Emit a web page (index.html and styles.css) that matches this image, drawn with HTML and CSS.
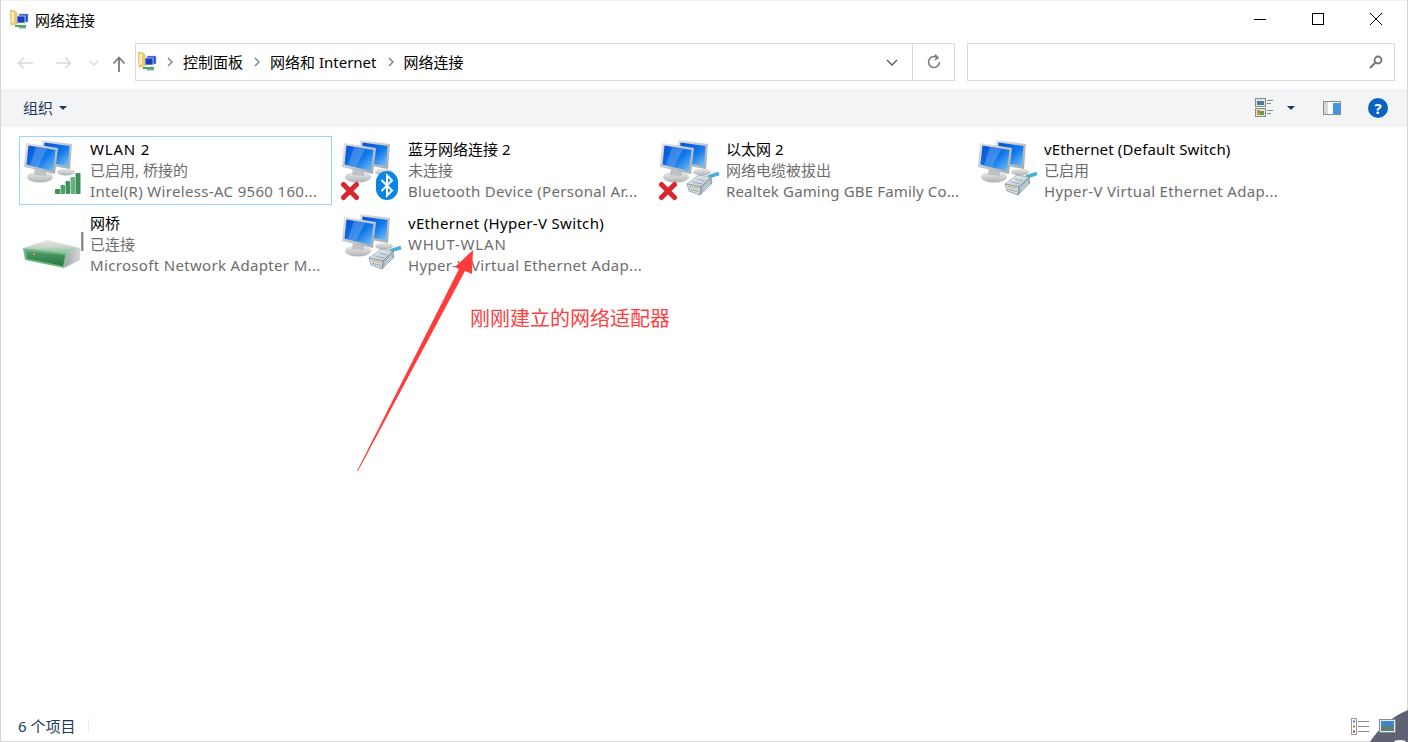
FILE: index.html
```html
<!DOCTYPE html>
<html lang="zh-CN">
<head>
  <meta charset="UTF-8">
  <meta name="viewport" content="width=device-width, initial-scale=1.0">
  <title>网络连接</title>
  <link rel="stylesheet" href="styles.css">
</head>
<body>

<svg class="defs" aria-hidden="true">
  <defs>
    <linearGradient id="screen" x1="0" y1="0" x2="1" y2="1">
      <stop offset="0" stop-color="#0550d6"/>
      <stop offset="0.55" stop-color="#0f78ea"/>
      <stop offset="1" stop-color="#7cc4f6"/>
    </linearGradient>
    <linearGradient id="frame" x1="0" y1="0" x2="1" y2="1">
      <stop offset="0" stop-color="#e2e5e8"/>
      <stop offset="1" stop-color="#a3a9af"/>
    </linearGradient>
    <linearGradient id="stand" x1="0" y1="0" x2="0" y2="1">
      <stop offset="0" stop-color="#eceded"/>
      <stop offset="1" stop-color="#b0b3b5"/>
    </linearGradient>
    <linearGradient id="routerTop" x1="0" y1="0" x2="0" y2="1">
      <stop offset="0" stop-color="#e4e6e5"/>
      <stop offset="0.55" stop-color="#c9d4cc"/>
      <stop offset="1" stop-color="#7cc08f"/>
    </linearGradient>
    <linearGradient id="routerFront" x1="0" y1="0" x2="0" y2="1">
      <stop offset="0" stop-color="#4f9e68"/>
      <stop offset="1" stop-color="#2a7342"/>
    </linearGradient>
    <linearGradient id="routerSide" x1="0" y1="0" x2="1" y2="0">
      <stop offset="0" stop-color="#9ea3a5"/>
      <stop offset="1" stop-color="#d6d9da"/>
    </linearGradient>
    <linearGradient id="plug" x1="0" y1="0" x2="1" y2="1">
      <stop offset="0" stop-color="#eef3f6"/>
      <stop offset="1" stop-color="#b4c2cc"/>
    </linearGradient>

    <symbol id="monitors" viewBox="0 0 64 64">
      <ellipse cx="44" cy="33" rx="9" ry="3.500" fill="url(#stand)"/>
      <polygon points="20,1 50,5 48,30 19,25" fill="url(#frame)"/>
      <polygon points="22.500,3.500 47.500,7 46,27 21,23" fill="url(#screen)"/>
      <ellipse cx="18" cy="38" rx="13" ry="5.500" fill="url(#stand)"/>
      <polygon points="13,29 24,31 24,37 12,36" fill="#bfc2c4"/>
      <polygon points="4,4 36,9 33,35 2,28" fill="url(#frame)"/>
      <polygon points="6.500,6.500 33.500,11 31,32 4.500,25.500" fill="url(#screen)"/>
      <polygon points="14,8 25,10 16,28 8,26" fill="#ffffff" opacity="0.2"/>
    </symbol>

    <symbol id="signal" viewBox="0 0 64 64">
      <rect x="33" y="50" width="5" height="5" rx="1" fill="#3f8f59"/>
      <rect x="38.500" y="46" width="4.500" height="9" rx="1" fill="#4aa566"/>
      <rect x="43.500" y="42" width="4.500" height="13" rx="1" fill="#3f8f59"/>
      <rect x="48.500" y="38" width="4.500" height="17" rx="1" fill="#62b27c"/>
      <rect x="53.500" y="34" width="5" height="21" rx="1" fill="#3f8f59"/>
    </symbol>

    <symbol id="cross" viewBox="0 0 64 64">
      <path d="M3.500 45.500 L16.500 58.500 M16.500 45.500 L3.500 58.500" stroke="#d6282e" stroke-width="5" stroke-linecap="round"/>
    </symbol>

    <symbol id="bluetooth" viewBox="0 0 64 64">
      <rect x="36" y="32" width="22" height="29" rx="11" fill="#0a84e6"/>
      <path d="M41.500 41 L52 51.500 L47 56.500 L47 36.500 L52 41.500 L41.500 52" fill="none" stroke="#ffffff" stroke-width="2"/>
    </symbol>

    <symbol id="ethernet" viewBox="0 0 64 64">
      <path d="M50 38 L61 34.500" stroke="#46b0de" stroke-width="3.500" fill="none"/>
      <polygon points="29,45 41,36 53,38 43,48" fill="url(#plug)" stroke="#8493a0" stroke-width="0.600"/>
      <polygon points="29,45 43,48 42,56 31,52" fill="#d3dbe1" stroke="#71808c" stroke-width="0.600"/>
      <polygon points="43,48 53,38 54,44 42,56" fill="#a7b5c0" stroke="#71808c" stroke-width="0.600"/>
      <path d="M32 47.500 L41 49.500" stroke="#c9a94c" stroke-width="1.400" stroke-dasharray="1.200 1"/>
      <path d="M33 50.500 L41 52.500" stroke="#71808c" stroke-width="1" stroke-dasharray="1.200 1"/>
      <path d="M45 49.500 L52 42.500 M44.500 52.500 L52 45" stroke="#e8eef2" stroke-width="0.800"/>
      <path d="M35 43 L44 45 M39 40 L47 42" stroke="#93a3af" stroke-width="0.800"/>
    </symbol>

    <symbol id="router" viewBox="0 0 64 64">
      <rect x="59" y="19" width="2.500" height="19" fill="#8b8f92"/>
      <polygon points="1,35 25,27 58,35 45,40" fill="url(#routerTop)"/>
      <polygon points="1,35 45,40 42,55 3,47" fill="#6fb884"/>
      <polygon points="4,38 43,42 41,53 5,45.500" fill="url(#routerFront)"/>
      <polygon points="45,40 58,35 58,47 42,55" fill="url(#routerSide)"/>
      <rect x="11" y="40" width="2" height="2" fill="#e0913a"/>
    </symbol>

    <symbol id="netfolder" viewBox="0 0 20 20">
      <polygon points="0,0 5,1 7,3 7,14 1,15" fill="#f0cb6a" stroke="#c9a445" stroke-width="0.500"/>
      <polygon points="1.500,2 4,2 4,12 1.500,13" fill="#fbeec2"/>
      <rect x="9" y="4" width="9" height="8" fill="#2b55c8" stroke="#aab4c8" stroke-width="0.500"/>
      <rect x="7" y="6" width="8" height="7" fill="#1a3cc0" stroke="#cfd6e0" stroke-width="0.800"/>
      <rect x="5" y="15" width="11" height="2" fill="#3fae55"/>
      <rect x="9" y="17" width="7" height="1.500" fill="#9aa0a6"/>
    </symbol>
  </defs>
</svg>

<div class="window">
  <div class="titlebar">
    <svg class="title-icon"><use href="#netfolder"/></svg>
    <span class="title-text">网络连接</span>
    <div class="win-controls">
      <svg class="win-btn" viewBox="0 0 14 14"><path d="M1 7.500 H13" stroke="#000" fill="none"/></svg>
      <svg class="win-btn" viewBox="0 0 14 14"><rect x="1.500" y="1.500" width="11" height="11" stroke="#000" fill="none"/></svg>
      <svg class="win-btn" viewBox="0 0 14 14"><path d="M1 1 L13 13 M13 1 L1 13" stroke="#000" fill="none"/></svg>
    </div>
  </div>

  <div class="addressrow">
    <div class="nav">
      <svg class="nav-back" viewBox="0 0 16 14"><path d="M16 7 H2 M7 1.500 L1.500 7 L7 12.500" stroke="#d9d9d9" stroke-width="1.600" fill="none"/></svg>
      <svg class="nav-forward" viewBox="0 0 16 14"><path d="M0 7 H14 M9 1.500 L14.500 7 L9 12.500" stroke="#d9d9d9" stroke-width="1.600" fill="none"/></svg>
      <svg class="nav-recent" viewBox="0 0 10 6"><path d="M1 1 L5 5 L9 1" stroke="#d9d9d9" stroke-width="1.400" fill="none"/></svg>
      <svg class="nav-up" viewBox="0 0 14 16"><path d="M7 16 V2 M1.500 7.500 L7 1.500 L12.500 7.500" stroke="#7a7a7a" stroke-width="1.800" fill="none"/></svg>
    </div>
    <div class="addressbox">
      <svg class="crumb-icon"><use href="#netfolder"/></svg>
      <svg class="crumb-sep" viewBox="0 0 6 10"><path d="M1 1 L5 5 L1 9" stroke="#7a7a7a" stroke-width="1.300" fill="none"/></svg>
      <span class="crumb">控制面板</span>
      <svg class="crumb-sep" viewBox="0 0 6 10"><path d="M1 1 L5 5 L1 9" stroke="#7a7a7a" stroke-width="1.300" fill="none"/></svg>
      <span class="crumb">网络和 Internet</span>
      <svg class="crumb-sep" viewBox="0 0 6 10"><path d="M1 1 L5 5 L1 9" stroke="#7a7a7a" stroke-width="1.300" fill="none"/></svg>
      <span class="crumb">网络连接</span>
      <svg class="addr-drop" viewBox="0 0 12 7"><path d="M1 1 L6 6 L11 1" stroke="#555" stroke-width="1.300" fill="none"/></svg>
      <div class="addr-refresh">
        <svg class="refresh-icon" viewBox="0 0 16 16"><path d="M13.500 8 A5.500 5.500 0 1 1 11 3.400 M9 0.800 L12 3.600 L9 6" stroke="#777" stroke-width="1.500" fill="none"/></svg>
      </div>
    </div>
    <div class="searchbox">
      <svg class="search-icon" viewBox="0 0 14 14"><circle cx="9" cy="5" r="3.500" stroke="#777" stroke-width="1.800" fill="none"/><path d="M6.500 7.500 L1 13" stroke="#777" stroke-width="2.200"/></svg>
    </div>
  </div>

  <div class="toolbar">
    <span class="organize">组织</span>
    <span class="caret"></span>
    <div class="toolbar-right">
      <svg class="view-icon" viewBox="0 0 19 20">
        <rect x="0.500" y="0.500" width="10" height="8" fill="#dfe6ea" stroke="#8a8a8a"/>
        <rect x="2" y="3" width="7" height="4" fill="#4f7f8f"/>
        <rect x="0.500" y="10.500" width="10" height="8" fill="#dfe6ea" stroke="#8a8a8a"/>
        <rect x="2" y="12" width="3" height="5" fill="#c8962e"/>
        <rect x="5" y="13" width="4" height="4" fill="#5f9e4a"/>
        <path d="M12 2.500 H18 M12 5.500 H16 M12 12.500 H18 M12 15.500 H16" stroke="#8a8a8a"/>
      </svg>
      <span class="caret caret-view"></span>
      <svg class="pane-icon" viewBox="0 0 18 14">
        <rect x="0.500" y="0.500" width="17" height="13" fill="#ffffff" stroke="#8a8a8a"/>
        <rect x="1" y="1" width="4" height="12" fill="#d9d9d9"/>
        <rect x="10" y="2" width="7" height="11" fill="#3d96e6"/>
      </svg>
      <span class="help">?</span>
    </div>
  </div>

  <div class="content">
    <div class="item item-selected">
      <svg class="item-icon"><use href="#monitors"/><use href="#signal"/></svg>
      <div class="item-text">
        <div class="item-name caps">WLAN 2</div>
        <div class="item-sub">已启用, 桥接的</div>
        <div class="item-sub latin">Intel(R) Wireless-AC 9560 160...</div>
      </div>
    </div>
    <div class="item">
      <svg class="item-icon"><use href="#monitors"/><use href="#cross"/><use href="#bluetooth"/></svg>
      <div class="item-text">
        <div class="item-name">蓝牙网络连接 2</div>
        <div class="item-sub">未连接</div>
        <div class="item-sub latin">Bluetooth Device (Personal Ar...</div>
      </div>
    </div>
    <div class="item">
      <svg class="item-icon"><use href="#monitors"/><use href="#cross"/><use href="#ethernet"/></svg>
      <div class="item-text">
        <div class="item-name">以太网 2</div>
        <div class="item-sub">网络电缆被拔出</div>
        <div class="item-sub latin-tight">Realtek Gaming GBE Family Co...</div>
      </div>
    </div>
    <div class="item">
      <svg class="item-icon"><use href="#monitors"/><use href="#ethernet"/></svg>
      <div class="item-text">
        <div class="item-name latin-tight">vEthernet (Default Switch)</div>
        <div class="item-sub">已启用</div>
        <div class="item-sub latin">Hyper-V Virtual Ethernet Adap...</div>
      </div>
    </div>
    <div class="item">
      <svg class="item-icon"><use href="#router"/></svg>
      <div class="item-text">
        <div class="item-name">网桥</div>
        <div class="item-sub">已连接</div>
        <div class="item-sub latin">Microsoft Network Adapter M...</div>
      </div>
    </div>
    <div class="item">
      <svg class="item-icon"><use href="#monitors"/><use href="#ethernet"/></svg>
      <div class="item-text">
        <div class="item-name latin">vEthernet (Hyper-V Switch)</div>
        <div class="item-sub caps">WHUT-WLAN</div>
        <div class="item-sub latin">Hyper-V Virtual Ethernet Adap...</div>
      </div>
    </div>
  </div>

  <div class="statusbar">
    <span class="status-count">6 个项目</span>
    <span class="status-sep"></span>
    <div class="status-right">
      <svg class="details-icon" viewBox="0 0 19 17">
        <rect x="0.500" y="0.500" width="5" height="16" fill="#ffffff" stroke="#9a9a9a"/>
        <rect x="2" y="2.500" width="2" height="2" fill="#3d7fd0"/>
        <rect x="2" y="7.500" width="2" height="2" fill="#9a8a3a"/>
        <rect x="2" y="12.500" width="2" height="2" fill="#c0392b"/>
        <path d="M7 3.500 H18 M7 8.500 H18 M7 13.500 H18" stroke="#8a8a8a"/>
      </svg>
      <svg class="large-icon" viewBox="0 0 17 14">
        <rect x="0.500" y="0.500" width="16" height="13" fill="#e6eef2" stroke="#8a8a8a"/>
        <rect x="2" y="2" width="13" height="5" fill="#3d86c8"/>
        <rect x="2" y="7" width="13" height="5" fill="#5d7f74"/>
      </svg>
    </div>
  </div>
</div>

<!-- bits added on top of the screenshot -->
<svg class="arrow" viewBox="0 0 130 235">
  <polygon points="116,10 115,34 108,31 1,231 0,231 102,29 98,27" fill="#ff3b3b"/>
</svg>
<div class="note">刚刚建立的网络适配器</div>
<svg class="corner" viewBox="0 0 38 32">
  <path d="M38 0 Q14 10 0 32 H38 Z" fill="#5e6272"/>
  <ellipse cx="30" cy="32" rx="6" ry="2" fill="#ffffff"/>
</svg>

</body>
</html>
```

FILE: styles.css
```css
body {
  margin: 0;
  height: 742px;
  overflow: hidden;
  background-color: #ffffff;
  font-family: "Noto Sans", "Noto Sans CJK SC", sans-serif;
  font-size: 15px;
  color: #000;
  position: relative;
}

.defs {
  position: absolute;
  width: 0;
  height: 0;
}

.window {
  height: 742px;
  box-sizing: border-box;
  border: 1px solid #d4d4d4;
  border-top-color: #efefef;
  display: flex;
  flex-direction: column;
  background-color: #fff;
}

.titlebar {
  height: 37px;
  display: flex;
  align-items: center;
  padding-left: 9px;
  flex-shrink: 0;
}

.title-icon {
  width: 20px;
  height: 20px;
  margin-right: 5px;
}

.title-text {
  line-height: 20px;
}

.win-controls {
  margin-left: auto;
  display: flex;
  padding-right: 24px;
  gap: 44px;
  margin-top: -1px;
}

.win-btn {
  width: 14px;
  height: 14px;
}

.addressrow {
  height: 38px;
  margin-top: 5px;
  display: flex;
  flex-shrink: 0;
}

.nav {
  width: 134px;
  display: flex;
  align-items: center;
  position: relative;
}

.nav-back {
  width: 16px;
  height: 14px;
  margin-left: 16px;
  margin-top: 2px;
}

.nav-forward {
  width: 16px;
  height: 14px;
  margin-left: 23px;
  margin-top: 2px;
}

.nav-recent {
  width: 10px;
  height: 6px;
  margin-left: 17px;
  margin-top: 2px;
}

.nav-up {
  width: 14px;
  height: 16px;
  margin-left: 13px;
  margin-top: 4px;
}

.addressbox {
  width: 820px;
  box-sizing: border-box;
  border: 1px solid #d9d9d9;
  display: flex;
  align-items: center;
  padding-left: 2px;
}

.crumb-icon {
  width: 20px;
  height: 20px;
  margin-right: -2px;
}

.crumb-sep {
  width: 6px;
  height: 10px;
  margin: 0 10px 0 11px;
}

.crumb {
  line-height: 20px;
}

.addr-drop {
  width: 12px;
  height: 7px;
  margin-left: auto;
  margin-right: 14px;
}

.addr-refresh {
  width: 41px;
  height: 100%;
  border-left: 1px solid #d9d9d9;
  display: flex;
  align-items: center;
  justify-content: center;
}

.refresh-icon {
  width: 16px;
  height: 16px;
}

.searchbox {
  width: 428px;
  margin-left: 12px;
  box-sizing: border-box;
  border: 1px solid #d9d9d9;
  display: flex;
  align-items: center;
  justify-content: flex-end;
  padding-right: 11px;
}

.search-icon {
  width: 14px;
  height: 14px;
}

.toolbar {
  height: 38px;
  margin-top: 8px;
  background-color: #f3f4f6;
  display: flex;
  align-items: center;
  padding-left: 22px;
  flex-shrink: 0;
}

.organize {
  color: #1e395b;
  line-height: 20px;
}

.caret {
  width: 0;
  height: 0;
  margin-left: 6px;
  border-left: 4px solid transparent;
  border-right: 4px solid transparent;
  border-top: 4px solid #1e395b;
}

.toolbar-right {
  margin-left: auto;
  display: flex;
  align-items: center;
  padding-right: 19px;
}

.view-icon {
  width: 19px;
  height: 20px;
}

.caret-view {
  margin-left: 13px;
}

.pane-icon {
  width: 18px;
  height: 14px;
  margin-left: 28px;
}

.help {
  width: 20px;
  height: 20px;
  margin-left: 27px;
  border-radius: 50%;
  background-color: #0a63c0;
  color: #fff;
  font-weight: bold;
  font-size: 15px;
  line-height: 20px;
  text-align: center;
}

.content {
  flex: 1;
  display: grid;
  grid-template-columns: repeat(4, 318px);
  grid-auto-rows: 74px;
  padding: 9px 0 0 18px;
}

.item {
  width: 313px;
  height: 69px;
  box-sizing: border-box;
  border: 1px solid transparent;
  display: flex;
}

.item-selected {
  border-color: #99d1ff;
}

.item-icon {
  width: 64px;
  height: 64px;
  margin: 2px 0 0 2px;
  flex-shrink: 0;
}

.item-text {
  margin-left: 4px;
  padding-top: 2px;
  white-space: nowrap;
}

.item-name {
  line-height: 21px;
}

.item-sub {
  line-height: 21px;
  color: #6d6d6d;
}

/* Noto Sans runs narrower than the original font on latin lines */
.latin {
  letter-spacing: 0.33px;
}

.latin-tight {
  letter-spacing: 0.15px;
}

.caps {
  letter-spacing: 0.8px;
}

.statusbar {
  height: 30px;
  display: flex;
  align-items: center;
  padding-left: 17px;
  flex-shrink: 0;
}

.status-count {
  color: #1e395b;
  width: 70px;
  line-height: 20px;
}

.status-sep {
  width: 1px;
  height: 14px;
  background-color: #eeeeee;
}

.status-right {
  margin-left: auto;
  display: flex;
  align-items: center;
  gap: 9px;
  padding-right: 11px;
  position: relative;
  z-index: 1;
}

.details-icon {
  width: 19px;
  height: 17px;
}

.large-icon {
  width: 17px;
  height: 14px;
}

.arrow {
  position: absolute;
  left: 357px;
  top: 240px;
  width: 130px;
  height: 235px;
}

.note {
  position: absolute;
  left: 470px;
  top: 305px;
  font-size: 20px;
  line-height: 28px;
  color: #ff4040;
  white-space: nowrap;
}

.corner {
  position: absolute;
  right: 0;
  bottom: 0;
  width: 38px;
  height: 32px;
}
```
